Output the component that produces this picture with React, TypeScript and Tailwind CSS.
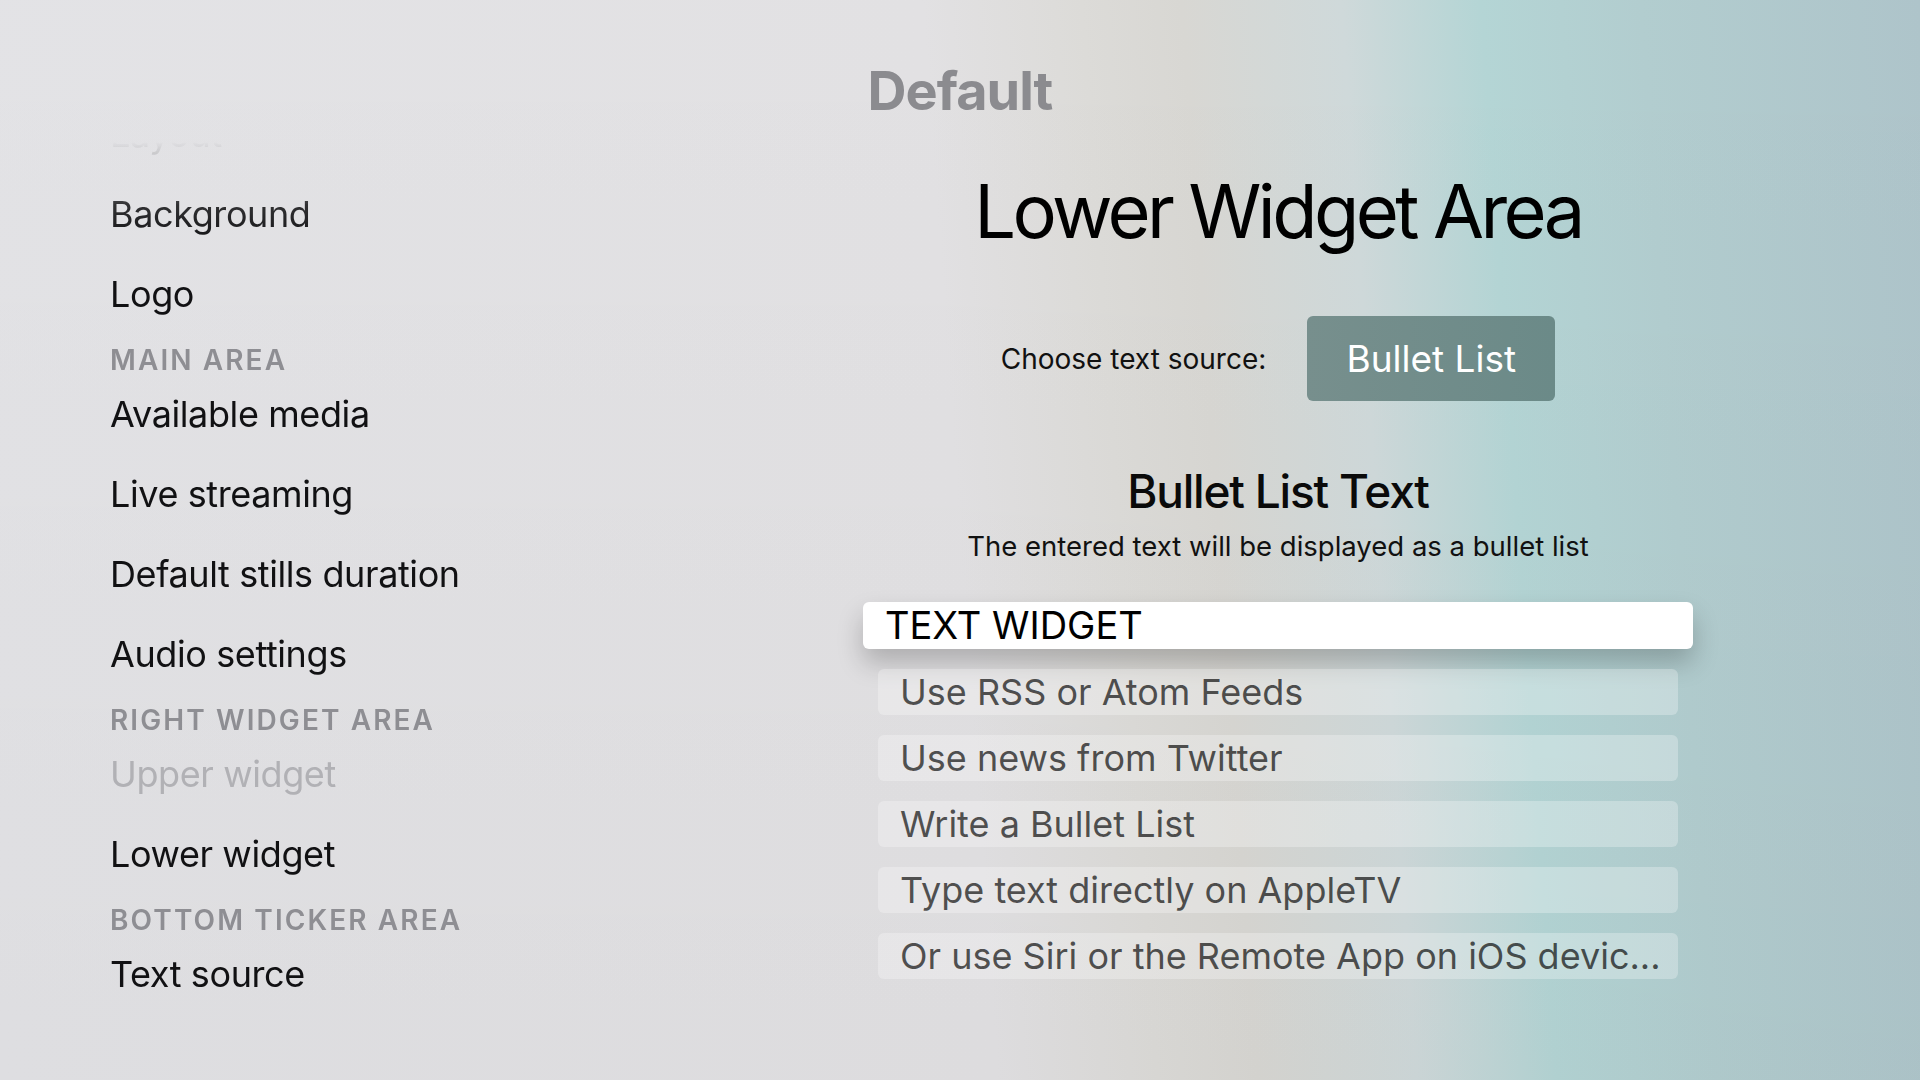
import React from "react";

type MenuEntry = { kind: "item" | "header"; label: string; disabled?: boolean };

const menu: MenuEntry[] = [
  { kind: "item", label: "Layout" },
  { kind: "item", label: "Background" },
  { kind: "item", label: "Logo" },
  { kind: "header", label: "MAIN AREA" },
  { kind: "item", label: "Available media" },
  { kind: "item", label: "Live streaming" },
  { kind: "item", label: "Default stills duration" },
  { kind: "item", label: "Audio settings" },
  { kind: "header", label: "RIGHT WIDGET AREA" },
  { kind: "item", label: "Upper widget", disabled: true },
  { kind: "item", label: "Lower widget" },
  { kind: "header", label: "BOTTOM TICKER AREA" },
  { kind: "item", label: "Text source" },
];

const rows = [
  "Use RSS or Atom Feeds",
  "Use news from Twitter",
  "Write a Bullet List",
  "Type text directly on AppleTV",
  "Or use Siri or the Remote App on iOS devic...",
];

export default function App() {
  return (
    <div className="relative w-[1920px] h-[1080px] overflow-hidden font-['Inter','Noto_Sans',sans-serif] bg-[linear-gradient(86deg,#e3e3e6_0%,#e2e1e3_50%,#dcdbd8_58%,#d8d7d3_63%,#cfd9da_71%,#b4d5d5_78%,#b2cdcf_86%,#aec4ca_100%)]">
      <div className="absolute inset-0 bg-[linear-gradient(180deg,rgba(255,255,255,0)_0%,rgba(0,0,0,0.025)_100%)]" />
      <div className="relative flex flex-col h-full">
        {/* Header */}
        <div className="h-[130px] flex justify-center pt-[64px]">
          <div className="text-[54px] leading-[54px] font-bold tracking-[-1px] text-[#8b8b8f]">
            Default
          </div>
        </div>

        <div className="flex flex-1">
          {/* Left menu */}
          <div className="w-[636px] pl-[110px] overflow-hidden [mask-image:linear-gradient(to_bottom,transparent_0px,transparent_12px,rgba(0,0,0,0.07)_18px,rgba(0,0,0,0.25)_40px,rgba(0,0,0,0.85)_75px,black_115px)]">
            <div className="-mt-[36px] flex flex-col">
              {menu.map((m, i) =>
                m.kind === "header" ? (
                  <div key={i} className="h-[40px] pt-[12px]">
                    <div className="text-[28px] leading-[29px] font-semibold tracking-[2.1px] text-[#8e8e93]">
                      {m.label}
                    </div>
                  </div>
                ) : (
                  <div
                    key={i}
                    className={
                      "h-[80px] flex items-center text-[36px] leading-[44px] tracking-[-0.4px] " +
                      (m.disabled ? "text-[#b1b1b5]" : "text-[#111113]")
                    }
                  >
                    {m.label}
                  </div>
                )
              )}
            </div>
          </div>

          {/* Right content */}
          <div className="flex-1 flex flex-col items-center pt-[36px]">
            <div className="h-[90px] text-[74px] leading-[90px] tracking-[-3.6px] text-black">
              Lower Widget Area
            </div>

            <div className="mt-[60px] flex items-center gap-[41px]">
              <div className="text-[28px] leading-[34px] text-[#111]">Choose text source:</div>
              <div className="w-[248px] h-[85px] rounded-[6px] bg-[linear-gradient(90deg,#778f8d,#6b8a88)] flex items-center justify-center text-[37px] text-white">
                Bullet List
              </div>
            </div>

            <div className="mt-[62px] h-[56px] text-[46px] leading-[56px] font-medium tracking-[-1.2px] text-[#0a0a0a]">
              Bullet List Text
            </div>
            <div className="mt-[10px] h-[34px] text-[27.5px] leading-[34px] text-[#111]">
              The entered text will be displayed as a bullet list
            </div>

            <div className="mt-[39px] w-[830px] h-[47px] rounded-[6px] bg-white shadow-[0_14px_26px_rgba(0,0,0,0.22)] flex items-center pl-[22px] text-[38px] leading-[47px] text-black">
              TEXT WIDGET
            </div>

            <div className="mt-[20px] flex flex-col gap-[20px]">
              {rows.map((r) => (
                <div
                  key={r}
                  className="w-[800px] h-[46px] rounded-[6px] bg-[rgba(255,255,255,0.28)] flex items-center pl-[22px] pr-[20px] overflow-hidden whitespace-nowrap text-[36px] leading-[46px] text-[rgba(0,0,0,0.68)]"
                >
                  {r}
                </div>
              ))}
            </div>
          </div>
        </div>
      </div>
    </div>
  );
}
